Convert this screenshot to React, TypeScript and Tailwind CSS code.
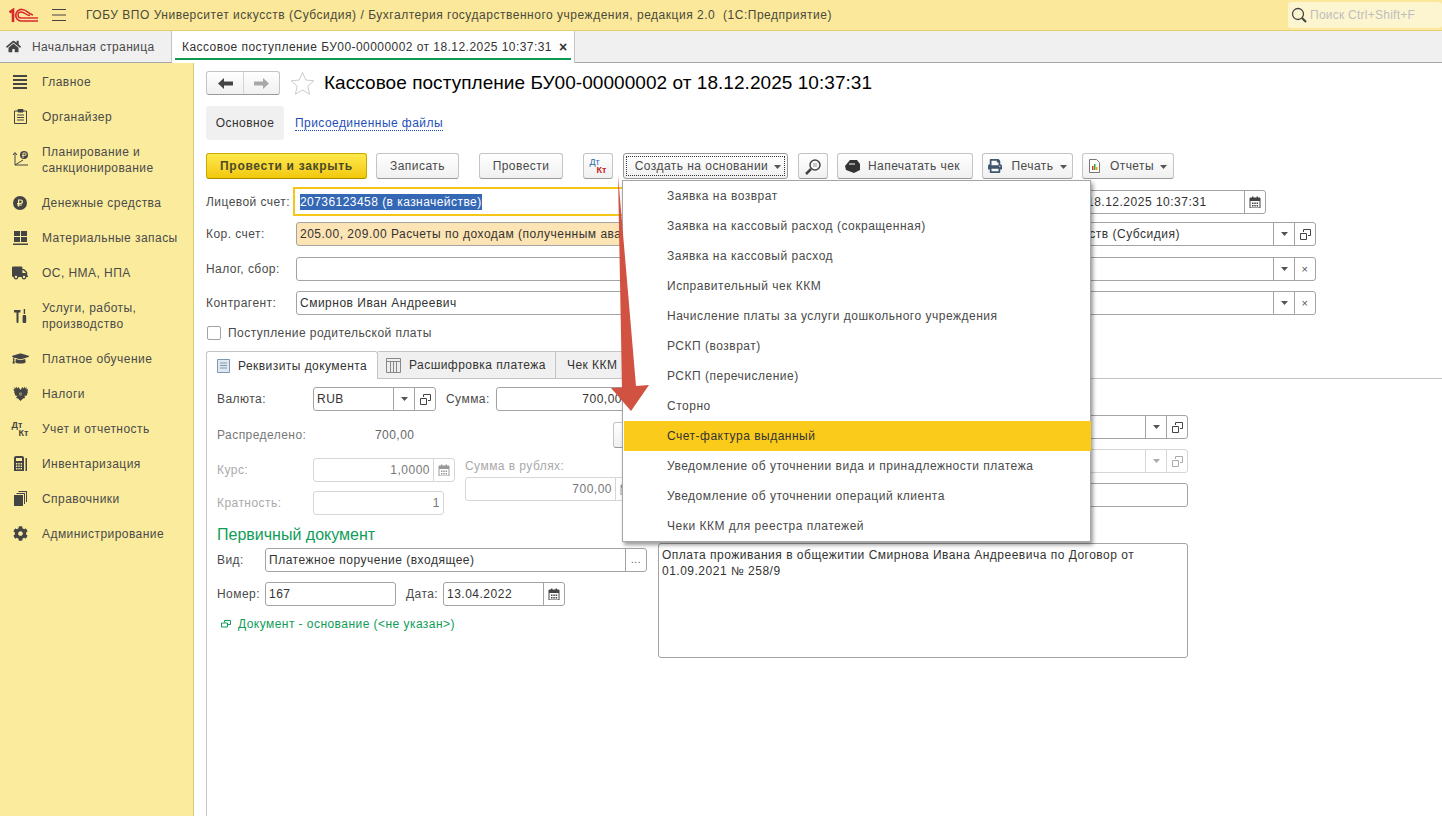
import React from 'react';
import { FaHome, FaTruck, FaGraduationCap, FaCog, FaPrint, FaRubleSign } from 'react-icons/fa';

const font = { fontFamily: '"Liberation Sans", Arial, sans-serif' };

const Logo = () => (
  <svg width="29" height="14" viewBox="0 0 29 14" fill="none" stroke="#d9262c" strokeWidth="1.700">
    <path d="M0.500 4.500L4 2V14" strokeWidth="2.600" />
    <path d="M13 1.500A5.600 5.600 0 0 0 12 13H29" />
    <path d="M12 10H29" strokeWidth="1.400" />
    <path d="M12 10A3 3 0 0 1 12 4C16 4 17 7.500 21 7.500" strokeWidth="1.400" />
    <path d="M13 1.500C18 1.500 19 6 24 7" strokeWidth="1.400" />
  </svg>
);

const Caret = ({ color = '#555' }: { color?: string }) => (
  <svg width="7" height="4" viewBox="0 0 7 4"><path d="M0 0h7L3.500 4z" fill={color} /></svg>
);

const CopyIcon = ({ color = '#444' }: { color?: string }) => (
  <svg width="11" height="11" viewBox="0 0 11 11" fill="none" stroke={color} strokeWidth="1">
    <path d="M3.500 3V.5h7v6H8" />
    <path d="M.5 4.500h6v6h-6z" fill="none" />
  </svg>
);

const CalIcon = ({ color = '#444' }: { color?: string }) => (
  <svg width="12" height="12" viewBox="0 0 12 12">
    <path d="M1 2h10v10H1z" fill="none" stroke={color} />
    <path d="M1 2h10v3H1z M3 0.500h1.400V3H3z M7.600 0.500H9V3H7.600z" fill={color} />
    <path d="M3 6.500h1.500V8H3zM5.300 6.500h1.500V8H5.300zM7.600 6.500h1.500V8H7.600zM3 9h1.500v1.500H3zM5.300 9h1.500v1.500H5.300zM7.600 9h1.500v1.500H7.600z" fill={color} />
  </svg>
);

const DtKt = ({ side }: { side?: boolean }) => (
  <span className={`flex flex-col w-[17px] font-bold leading-[8px] tracking-normal text-[9px] ${side ? 'text-[#444]' : ''}`}>
    <span className={`self-start ${side ? '' : 'font-normal text-[#2a6aa8]'}`}>Дт</span>
    <span className={`self-end ${side ? '' : 'text-[#c8201c]'}`}>Кт</span>
  </span>
);

const sideIcons: Record<string, React.ReactNode> = {
  main: (
    <svg width="14" height="14" viewBox="0 0 14 14" fill="#444"><path d="M0 0h14v2H0zM0 4h14v2H0zM0 8h14v2H0zM0 12h14v2H0z" /></svg>
  ),
  org: (
    <svg width="13" height="15" viewBox="0 0 13 15" fill="none" stroke="#444">
      <path d="M.5 2h12v12.500H.5z" />
      <path d="M4 .5h5V3H4z" fill="#444" />
      <path d="M3 6h7M3 8.500h7M3 11h7" />
    </svg>
  ),
  plan: (
    <svg width="17" height="17" viewBox="0 0 17 17" fill="none" stroke="#444">
      <path d="M3 2v12h13M1 4l2-2.500L5 4" />
      <path d="M3 14l8-5" />
      <circle cx="12" cy="4" r="4" fill="#444" stroke="none" />
      <path d="M11 7V2h2a1 1 0 0 1 0 2.400h-3" stroke="#fbec9e" strokeWidth="0.900" />
    </svg>
  ),
  money: (
    <span className="w-[14px] h-[14px] rounded-full bg-[#444] flex items-center justify-center text-[#fbec9e]"><FaRubleSign size={8} /></span>
  ),
  stock: (
    <svg width="15" height="14" viewBox="0 0 15 14" fill="#444"><path d="M1 0h6v5H1zM8 0h6v5H8zM1 6h6v5H1zM8 6h6v5H8zM0 12.500h15V14H0z" /></svg>
  ),
  truck: <FaTruck size={16} color="#444" />,
  tools: (
    <svg width="13" height="14" viewBox="0 0 13 14" fill="#444">
      <path d="M0 1h6.500v2.500H4.500V13a1 1 0 0 1-2 0V3.500H0zM9.700 0h1.400v5H9.700zM9 6h2.800l.4 1.500V13a1 1 0 0 1-1 1H9.600a1 1 0 0 1-1-1V7.500z" />
    </svg>
  ),
  cap: <FaGraduationCap size={17} color="#444" />,
  eagle: (
    <svg width="15" height="15" viewBox="0 0 15 15" fill="#444">
      <path d="M0 3l1.500.5L1.500 1l1.500 1.500L3.500.5l1 2L5.500 1l1 1.500L7.500 4l1-1.500 1-1.500 1 1.500 1-2 .5 2L13.500 1v2.500L15 3l-.5 2.500.5.500-1 2 .3.500-1.300 1.500-1.500-.5L12 12l-2 .5L7.500 15 5 12.500 3 12l1.500-2.500-1.500.5-1.300-1.500.3-.5-1-2 .5-.5z" />
      <path d="M6 6.500h3v3H6z" fill="#8a8560" />
    </svg>
  ),
  dtkt: <DtKt side />,
  calc: (
    <svg width="13" height="15" viewBox="0 0 13 15" fill="#444">
      <path d="M0 2a2 2 0 0 1 2-2h6a2 2 0 0 1 2 2v13H0z" />
      <path d="M2 2h6v3H2zM2 7h1.400v1.400H2zM4.300 7h1.400v1.400H4.300zM6.600 7H8v1.400H6.600zM2 9.500h1.400v1.400H2zM4.300 9.500h1.400v1.400H4.300zM6.600 9.500H8v1.400H6.600zM2 12h1.400v1.400H2zM4.300 12h1.400v1.400H4.300zM6.600 12H8v1.400H6.600z" fill="#fbec9e" />
      <path d="M11.500 2H13v13h-1.500z" />
    </svg>
  ),
  books: (
    <svg width="13" height="15" viewBox="0 0 13 15" fill="#444">
      <path d="M0 4h9v11H0z" />
      <path d="M2.500 2H11v11h-1V3H2.500zM4.500 0H13v11h-1V1H4.500z" />
    </svg>
  ),
  gear: <FaCog size={15} color="#444" />,
};

const menu: { key: string; label: React.ReactNode; h: number }[] = [
  { key: 'main', label: 'Главное', h: 35 },
  { key: 'org', label: 'Органайзер', h: 35 },
  { key: 'plan', label: <>Планирование и<br />санкционирование</>, h: 51 },
  { key: 'money', label: 'Денежные средства', h: 35 },
  { key: 'stock', label: 'Материальные запасы', h: 35 },
  { key: 'truck', label: 'ОС, НМА, НПА', h: 35 },
  { key: 'tools', label: <>Услуги, работы,<br />производство</>, h: 51 },
  { key: 'cap', label: 'Платное обучение', h: 35 },
  { key: 'eagle', label: 'Налоги', h: 35 },
  { key: 'dtkt', label: 'Учет и отчетность', h: 35 },
  { key: 'calc', label: 'Инвентаризация', h: 35 },
  { key: 'books', label: 'Справочники', h: 35 },
  { key: 'gear', label: 'Администрирование', h: 35 },
];

const Btn = ({ w, children, className = '' }: { w: number; children: React.ReactNode; className?: string }) => (
  <div
    className={`h-[26px] shrink-0 flex items-center justify-center rounded-[3px] border border-[#c4c4c4] border-b-[#999] bg-gradient-to-b from-white to-[#f0f0f0] text-[#4a4a4a] ${className}`}
    style={{ width: w }}
  >
    {children}
  </div>
);

const Field = ({
  w,
  text,
  right,
  btns = [],
  disabled,
  bg,
  className = '',
}: {
  w: number;
  text?: React.ReactNode;
  right?: boolean;
  btns?: React.ReactNode[];
  disabled?: boolean;
  bg?: string;
  className?: string;
}) => (
  <div
    className={`h-[24px] shrink-0 flex items-stretch rounded-[3px] border tracking-[0.5px] ${disabled ? 'border-[#d6d6d6] text-[#777]' : 'border-[#a3a3a3] text-[#333]'} ${className}`}
    style={{ width: w, background: bg }}
  >
    <div className={`flex-1 min-w-0 flex items-center px-[3px] overflow-hidden whitespace-nowrap ${right ? 'justify-end' : ''}`}>{text}</div>
    {btns.map((b, i) => (
      <div key={i} className={`w-[21px] flex items-center justify-center border-l ${disabled ? 'border-[#d6d6d6]' : 'border-[#a3a3a3]'}`}>{b}</div>
    ))}
  </div>
);

const items = [
  'Заявка на возврат',
  'Заявка на кассовый расход (сокращенная)',
  'Заявка на кассовый расход',
  'Исправительный чек ККМ',
  'Начисление платы за услуги дошкольного учреждения',
  'РСКП (возврат)',
  'РСКП (перечисление)',
  'Сторно',
  'Счет-фактура выданный',
  'Уведомление об уточнении вида и принадлежности платежа',
  'Уведомление об уточнении операций клиента',
  'Чеки ККМ для реестра платежей',
];

export default function App() {
  return (
    <div className="relative w-[1442px] h-[816px] overflow-hidden bg-white text-[12px] tracking-[0.45px] text-[#4a4a4a] flex flex-col" style={font}>
      {/* title bar */}
      <header className="h-[31px] shrink-0 flex items-center bg-[#fbe89a] border-b border-[#e6cf72]">
        <div className="w-[52px] pl-[9px] flex"><Logo /></div>
        <svg width="14" height="12" viewBox="0 0 14 12" stroke="#444"><path d="M0 .5h14M0 6h14M0 11.500h14" /></svg>
        <span className="ml-[20px] text-[#4a4a3a] tracking-[0.52px] whitespace-pre">ГОБУ ВПО Университет искусств (Субсидия) / Бухгалтерия государственного учреждения, редакция 2.0  (1С:Предприятие)</span>
        <div className="ml-auto mr-0 w-[154px] h-[26px] mb-[1px] rounded-[3px] bg-[#fdf5cf] flex items-center pl-[3px] gap-[3px] tracking-[0.25px] text-[#bdbdbd]">
          <svg width="16" height="16" viewBox="0 0 16 16" fill="none" stroke="#444" strokeWidth="1.300"><circle cx="7" cy="7" r="5.500" /><path d="M11 11l4 4" strokeWidth="2.200" /></svg>
          Поиск Ctrl+Shift+F
        </div>
      </header>

      {/* open windows */}
      <nav className="h-[32px] shrink-0 flex items-stretch bg-[#f0f0f0] border-b border-[#a6a6a6]">
        <div className="w-[172px] flex items-center border-r border-[#c4c4c4] tracking-[0.35px]">
          <FaHome size={15} color="#444" className="ml-[6px]" />
          <span className="ml-[11px]">Начальная страница</span>
        </div>
        <div className="relative w-[403px] flex items-center bg-white border-r border-[#c4c4c4] -mb-[1px] pl-[10px] text-[#333]">
          Кассовое поступление БУ00-00000002 от 18.12.2025 10:37:31
          <span className="ml-[7px] text-[14px] font-bold text-[#333]">×</span>
          <span className="absolute left-[3px] right-[3px] bottom-[3px] h-[2px] bg-[#0d9a50]" />
        </div>
      </nav>

      <div className="flex-1 flex min-h-0">
        {/* sections */}
        <aside className="w-[194px] shrink-0 bg-[#fbeb9c] border-r border-[#d8c979] pt-[1px]">
          {menu.map((m) => (
            <div key={m.key} className="flex items-center leading-[16px]" style={{ height: m.h }}>
              <div className="w-[42px] pr-[2px] flex justify-center shrink-0">{sideIcons[m.key]}</div>
              <div>{m.label}</div>
            </div>
          ))}
        </aside>

        {/* document form */}
        <main className="flex-1 min-w-0 pl-[12px] pt-[8px]">
          <div className="flex items-center h-[24px]">
            <div className="w-[74px] h-[24px] flex rounded-[3px] border border-[#c4c4c4] border-b-[#999] bg-gradient-to-b from-white to-[#f0f0f0]">
              <div className="w-[37px] flex items-center justify-center border-r border-[#d4d4d4]">
                <svg width="15" height="11" viewBox="0 0 15 11" fill="#444"><path d="M0 5.500L6 0v3.500h9v4H6V11z" /></svg>
              </div>
              <div className="flex-1 flex items-center justify-center">
                <svg width="15" height="11" viewBox="0 0 15 11" fill="#a8a8a8"><path d="M15 5.500L9 0v3.500H0v4h9V11z" /></svg>
              </div>
            </div>
            <svg className="ml-[10px]" width="25" height="25" viewBox="0 0 25 25" fill="none" stroke="#c8ccd2"><path d="M12.500 1.500l3.300 7.500 8 .8-6 5.400 1.800 8-7.100-4.200-7.100 4.200 1.800-8-6-5.400 8-.8z" /></svg>
            <h1 className="ml-[9px] text-[19px] font-normal tracking-[0.05px] text-black whitespace-nowrap">Кассовое поступление БУ00-00000002 от 18.12.2025 10:37:31</h1>
          </div>

          <div className="mt-[11px] flex items-center h-[34px]">
            <div className="w-[78px] h-full rounded-[3px] bg-[#f0f0f0] flex items-center justify-center text-[#333]">Основное</div>
            <span className="ml-[11px] text-[#1f4fb8] border-b border-dotted border-[#1f4fb8] leading-[14px]">Присоединенные файлы</span>
          </div>

          {/* command bar */}
          <div className="mt-[13px] flex items-center">
            <div className="w-[161px] h-[26px] flex items-center justify-center rounded-[3px] border border-[#c9a800] border-b-[#a88e00] bg-gradient-to-b from-[#ffe94a] to-[#f2c800] font-bold tracking-[0.7px] text-[#4a4a2a]">Провести и закрыть</div>
            <Btn w={83} className="ml-[9px]">Записать</Btn>
            <Btn w={84} className="ml-[20px]">Провести</Btn>
            <Btn w={30} className="ml-[20px]"><DtKt /></Btn>
            <Btn w={165} className="ml-[10px] !border-[#999] p-[2px]">
              <span className="w-full h-full pl-[5px] flex items-center justify-center border border-dotted border-[#333]">
                Создать на основании <span className="ml-[6px] mt-[1px]"><Caret /></span>
              </span>
            </Btn>
            <Btn w={30} className="ml-[10px]">
              <svg width="17" height="17" viewBox="0 0 17 17" fill="none" stroke="#444"><circle cx="10" cy="7" r="5" strokeWidth="1.500" /><path d="M6 11l-5 5" strokeWidth="2.500" /><path d="M8 6h4M8 8h4" stroke="#999" /></svg>
            </Btn>
            <Btn w={136} className="ml-[9px]">
              <svg className="mr-[7px]" width="16" height="13" viewBox="0 0 16 13" fill="#333"><path d="M5 0h7l3 4v6l-6 3-8-3-1-4z" /><path d="M4 4h6" stroke="#fff" /></svg>
              <span className="mr-[5px]">Напечатать чек</span>
            </Btn>
            <Btn w={91} className="ml-[9px]">
              <FaPrint size={14} color="#40566e" className="mr-[9px]" />Печать<span className="ml-[6px] mt-[1px]"><Caret /></span>
            </Btn>
            <Btn w={92} className="ml-[9px]">
              <svg className="mr-[10px]" width="11" height="14" viewBox="0 0 11 14"><path d="M.5.500h7l3 3v10H.5z" fill="#fff" stroke="#777" /><path d="M3 7h1.500v4H3z" fill="#d33" /><path d="M5 5h1.500v6H5z" fill="#3a3" /><path d="M7 8h1.500v3H7z" fill="#e6a800" /></svg>
              Отчеты<span className="ml-[6px] mt-[1px]"><Caret /></span>
            </Btn>
          </div>

          {/* header fields */}
          <div className="mt-[8px] flex items-center h-[29px]">
            <span className="w-[87px] shrink-0">Лицевой счет:</span>
            <div className="w-[500px] h-[29px] shrink-0 border-[2px] border-[#f5c518] flex items-center pl-[5px] tracking-[0.45px] text-[#333]">
              <span className="bg-[#3467b4] text-white leading-[16px]">20736123458 (в казначействе)</span>
            </div>
            <Field w={187} className="ml-[286px]" text={<span className="pl-[4px]">18.12.2025 10:37:31</span>} btns={[<CalIcon />]} />
          </div>

          <div className="mt-[6px] flex items-center">
            <span className="w-[90px] shrink-0">Кор. счет:</span>
            <Field w={500} bg="#fde4b4" text="205.00, 209.00 Расчеты по доходам (полученным авансам)" />
            <Field w={506} className="ml-[14px]" right text={<span className="pr-[90px]">ГОБУ ВПО Университет искусств (Субсидия)</span>} btns={[<Caret />, <CopyIcon />]} />
          </div>
          <div className="mt-[11px] flex items-center">
            <span className="w-[90px] shrink-0">Налог, сбор:</span>
            <Field w={500} />
            <Field w={506} className="ml-[14px]" btns={[<Caret />, <span className="text-[#555] text-[11px]">×</span>]} />
          </div>
          <div className="mt-[10px] flex items-center">
            <span className="w-[90px] shrink-0">Контрагент:</span>
            <Field w={500} text="Смирнов Иван Андреевич" />
            <Field w={506} className="ml-[14px]" btns={[<Caret />, <span className="text-[#555] text-[11px]">×</span>]} />
          </div>

          <label className="mt-[10px] flex items-center h-[16px]">
            <span className="w-[14px] h-[14px] mr-[7px] ml-[1px] rounded-[2px] border border-[#a3a3a3] bg-white" />
            Поступление родительской платы
          </label>

          {/* page tabs */}
          <div className="mt-[10px] h-[28px] flex items-stretch border-b border-[#c4c4c4] text-[#333]">
            <div className="w-[172px] -mb-[1px] flex items-center pl-[10px] bg-white border border-b-0 border-[#c4c4c4] rounded-t-[3px]">
              <svg className="mr-[8px]" width="13" height="14" viewBox="0 0 13 14" fill="#dfe8f0" stroke="#7f97ad"><path d="M.5.500h12v13H.5z" /><path d="M3 4h7M3 6.500h7M3 9h7" fill="none" /></svg>
              Реквизиты документа
            </div>
            <div className="w-[178px] flex items-center pl-[8px] bg-[#f0f0f0] border-t border-r border-[#c4c4c4]">
              <svg className="mr-[8px]" width="15" height="15" viewBox="0 0 15 15" fill="#eee" stroke="#888"><path d="M.5.500h14v14H.5z" /><path d="M.5 3.500h14M4.500 3.500v11M7.500 3.500v11M10.500 3.500v11" fill="none" /></svg>
              Расшифровка платежа
            </div>
            <div className="w-[90px] flex items-center pl-[11px] bg-[#f0f0f0] border-t border-r border-[#c4c4c4]">Чек ККМ</div>
          </div>

          <div className="border-l border-[#c4c4c4] h-[460px] flex pt-[8px] pl-[10px]">
            {/* left column */}
            <div className="w-[430px] shrink-0">
              <div className="flex items-center">
                <span className="w-[96px] shrink-0">Валюта:</span>
                <Field w={123} text="RUB" btns={[<Caret />, <CopyIcon />]} />
                <span className="ml-[10px] w-[50px] shrink-0">Сумма:</span>
                <Field w={130} right text="700,00" />
              </div>
              <div className="mt-[12px] flex items-center h-[24px]">
                <span className="w-[158px] text-[#777]">Распределено:</span>
                <span className="text-[#666]">700,00</span>
                <Btn w={30} className="ml-[199px]"><span /></Btn>
              </div>
              <div className="mt-[11px] flex">
                <div className="w-[248px] shrink-0">
                  <div className="flex items-center">
                    <span className="w-[96px] shrink-0 text-[#aaa]">Курс:</span>
                    <Field w={142} disabled right text="1,0000" btns={[<CalIcon color="#999" />]} />
                  </div>
                  <div className="mt-[9px] flex items-center">
                    <span className="w-[96px] shrink-0 text-[#aaa]">Кратность:</span>
                    <Field w={131} disabled right text="1" />
                  </div>
                </div>
                <div>
                  <div className="text-[#aaa] leading-[14px] mt-[1px]">Сумма в рублях:</div>
                  <Field w={172} disabled right text="700,00" className="mt-[4px]" btns={[<CalIcon color="#999" />]} />
                </div>
              </div>
              <div className="mt-[10px] text-[16px] tracking-normal leading-[20px] text-[#0f9d58]">Первичный документ</div>
              <div className="mt-[3px] flex items-center">
                <span className="w-[48px] shrink-0">Вид:</span>
                <Field w={382} text="Платежное поручение (входящее)" btns={[<span className="text-[10px] text-[#555] -mt-[1px]">...</span>]} />
              </div>
              <div className="mt-[10px] flex items-center">
                <span className="w-[48px] shrink-0">Номер:</span>
                <Field w={131} text="167" />
                <span className="ml-[10px] w-[37px] shrink-0">Дата:</span>
                <Field w={122} text="13.04.2022" btns={[<CalIcon />]} />
              </div>
              <div className="mt-[9px] ml-[4px] flex items-center text-[#0f9d58]">
                <svg className="mr-[7px]" width="10" height="8" viewBox="0 0 10 8" fill="none" stroke="#0f9d58"><path d="M3.500 2.500V.5h6v4H6.500M.5 3h6v4h-6z" /></svg>
                Документ - основание (&lt;не указан&gt;)
              </div>
            </div>
            {/* right column */}
            <div className="w-[530px] ml-[11px] shrink-0">
              <Field w={530} className="mt-[28px]" btns={[<Caret />, <CopyIcon />]} />
              <Field w={530} className="mt-[10px]" disabled btns={[<Caret color="#aaa" />, <CopyIcon color="#aaa" />]} />
              <Field w={530} className="mt-[10px]" />
              <div className="mt-[36px] h-[115px] rounded-[3px] border border-[#a3a3a3] px-[3px] pt-[3px] leading-[16px] tracking-[0.5px] text-[#333]">
                Оплата проживания в общежитии Смирнова Ивана Андреевича по Договор от 01.09.2021 № 258/9
              </div>
            </div>
          </div>
        </main>
      </div>

      {/* popup menu */}
      <div className="absolute left-[622px] top-[180px] w-[469px] h-[362px] bg-white border border-[#a6a6a6] shadow-[2px_3px_4px_rgba(0,0,0,0.4)] pl-[1px] tracking-[0.5px]">
        {items.map((it, i) => (
          <div key={it} className={`h-[30px] flex items-center pl-[43px] pb-[1px] -mr-[1px] ${i === 8 ? 'bg-[#fbcb1c] text-[#333]' : ''}`}>{it}</div>
        ))}
      </div>

      {/* annotation arrow */}
      <svg className="absolute left-[600px] top-[170px]" width="60" height="250" viewBox="0 0 60 250">
        <path d="M18 5L36 216L49 215L31 241L11 218L22 217.500Z" fill="#d25241" />
      </svg>
    </div>
  );
}
